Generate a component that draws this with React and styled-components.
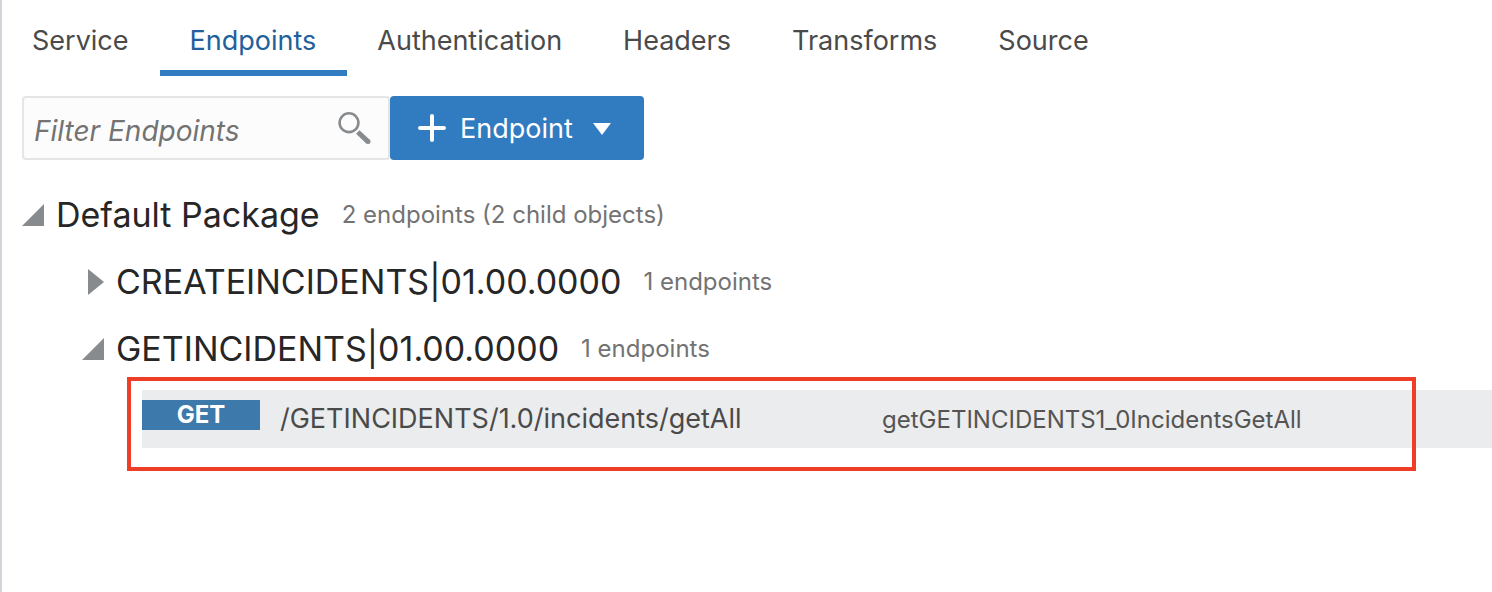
import React from "react";
import styled, { createGlobalStyle } from "styled-components";

const GlobalStyle = createGlobalStyle`
  * { box-sizing: border-box; }
  body {
    margin: 0;
    background: #fff;
    color: #4a4a4a;
    font-family: Inter, "Liberation Sans", sans-serif;
  }
  button, input { font: inherit; }
`;

const Page = styled.main`
  min-height: 100vh;
  border-left: 2px solid #d2d6db;
`;

const TabBar = styled.nav`
  display: flex;
`;

const Tab = styled.a`
  height: 76px;
  padding: 23px 31px 0 30px;
  border-bottom: 6px solid ${(p) => (p.$active ? "#317bc0" : "transparent")};
  color: ${(p) => (p.$active ? "#22609c" : "#4a4a4a")};
  font-size: 27px;
  line-height: 36px;
  text-decoration: none;
  white-space: nowrap;
`;

const Toolbar = styled.div`
  display: flex;
  padding: 20px 20px 0;
`;

const SearchBox = styled.label`
  display: flex;
  align-items: center;
  width: 368px;
  height: 64px;
  padding: 0 16px 0 10px;
  border: 2px solid #e4e5e6;
  border-radius: 4px;
  background: #fcfcfc;
`;

const SearchInput = styled.input`
  flex: 1;
  min-width: 0;
  padding: 5px 0 0;
  border: 0;
  outline: 0;
  background: transparent;
  font-size: 28px;
  font-style: italic;
  line-height: 36px;
  &::placeholder { color: #737373; opacity: 1; }
`;

const AddButton = styled.button`
  display: flex;
  align-items: center;
  gap: 14px;
  height: 64px;
  padding: 0 33px 0 28px;
  border: 0;
  border-radius: 4px;
  background: #317bc0;
  color: #fff;
  font-size: 27px;
  line-height: 36px;
`;

const ButtonLabel = styled.span`
  padding: 2px 6px 0 0;
`;

const Tree = styled.ul`
  margin: 0;
  padding: ${(p) => (p.$nested ? "0 0 0 60px" : "21px 0 0 20px")};
  list-style: none;
`;

const NodeRow = styled.button`
  display: flex;
  align-items: center;
  height: 67px;
  padding: 0;
  border: 0;
  background: transparent;
  text-align: left;
  white-space: nowrap;
`;

const ArrowSlot = styled.span`
  display: flex;
  justify-content: flex-end;
  width: 22px;
  margin-right: 12px;
`;

const NodeName = styled.span`
  color: #262626;
  font-size: 34px;
  line-height: 44px;
`;

const NodeCount = styled.span`
  margin-left: 22px;
  color: #737373;
  font-size: 24px;
  line-height: 32px;
`;

const EndpointItem = styled.li`
  position: relative;
  margin-top: 8px;
`;

const EndpointRow = styled.a`
  display: flex;
  height: 58px;
  padding-top: 10px;
  background: #ebeced;
  color: #4a4a4a;
  text-decoration: none;
  white-space: nowrap;
`;

const Method = styled.span`
  width: 118px;
  height: 30px;
  background: #3d79aa;
  color: #fff;
  font-size: 24px;
  font-weight: 700;
  line-height: 30px;
  text-align: center;
`;

const Path = styled.span`
  width: 602px;
  padding-left: 20px;
  font-size: 27px;
  line-height: 38px;
`;

const Operation = styled.span`
  padding-left: 20px;
  color: #545454;
  font-size: 24px;
  line-height: 40px;
`;

const Highlight = styled.span`
  position: absolute;
  inset: -13px 76px -23px -15px;
  border: 4px solid #ef3e27;
  pointer-events: none;
`;

const SearchIcon = () => (
  <svg width="34" height="34" viewBox="0 0 34 34" fill="none" aria-hidden="true">
    <circle cx="11" cy="11.7" r="9.4" stroke="#878b8e" strokeWidth="2.6" />
    <path d="M19.8 21 30 30.6" stroke="#878b8e" strokeWidth="5" />
    <circle cx="30" cy="30.6" r="2.5" fill="#878b8e" />
  </svg>
);

const PlusIcon = () => (
  <svg width="28" height="28" viewBox="0 0 28 28" aria-hidden="true">
    <path d="M14 2v24M2 14h24" stroke="#fff" strokeWidth="4" strokeLinecap="round" />
  </svg>
);

const CaretIcon = () => (
  <svg width="18" height="14" viewBox="0 0 18 14" aria-hidden="true">
    <path d="M0 2h18L9 14z" fill="#fff" />
  </svg>
);

const Arrow = ({ open }) => (
  <ArrowSlot>
    {open ? (
      <svg width="22" height="22" viewBox="0 0 22 22" aria-hidden="true">
        <path d="M22 0v22H0z" fill="#878b8e" />
      </svg>
    ) : (
      <svg width="16" height="26" viewBox="0 0 16 26" aria-hidden="true">
        <path d="M0 0l16 13L0 26z" fill="#878b8e" />
      </svg>
    )}
  </ArrowSlot>
);

const TreeNode = ({ name, count, open, children }) => (
  <li>
    <NodeRow type="button" aria-expanded={!!open}>
      <Arrow open={open} />
      <NodeName>{name}</NodeName>
      <NodeCount>{count}</NodeCount>
    </NodeRow>
    {open && <Tree $nested>{children}</Tree>}
  </li>
);

const tabs = ["Service", "Endpoints", "Authentication", "Headers", "Transforms", "Source"];

export default function App() {
  return (
    <>
      <GlobalStyle />
      <Page>
        <TabBar>
          {tabs.map((t) => (
            <Tab key={t} href={`#${t.toLowerCase()}`} $active={t === "Endpoints"}>
              {t}
            </Tab>
          ))}
        </TabBar>
        <Toolbar>
          <SearchBox>
            <SearchInput type="text" placeholder="Filter Endpoints" aria-label="Filter Endpoints" />
            <SearchIcon />
          </SearchBox>
          <AddButton type="button">
            <PlusIcon />
            <ButtonLabel>Endpoint</ButtonLabel>
            <CaretIcon />
          </AddButton>
        </Toolbar>
        <Tree>
          <TreeNode name="Default Package" count="2 endpoints (2 child objects)" open>
            <TreeNode name="CREATEINCIDENTS|01.00.0000" count="1 endpoints" />
            <TreeNode name="GETINCIDENTS|01.00.0000" count="1 endpoints" open>
              <EndpointItem>
                <EndpointRow href="#get-all">
                  <Method>GET</Method>
                  <Path>/GETINCIDENTS/1.0/incidents/getAll</Path>
                  <Operation>getGETINCIDENTS1_0IncidentsGetAll</Operation>
                </EndpointRow>
                <Highlight />
              </EndpointItem>
            </TreeNode>
          </TreeNode>
        </Tree>
      </Page>
    </>
  );
}
